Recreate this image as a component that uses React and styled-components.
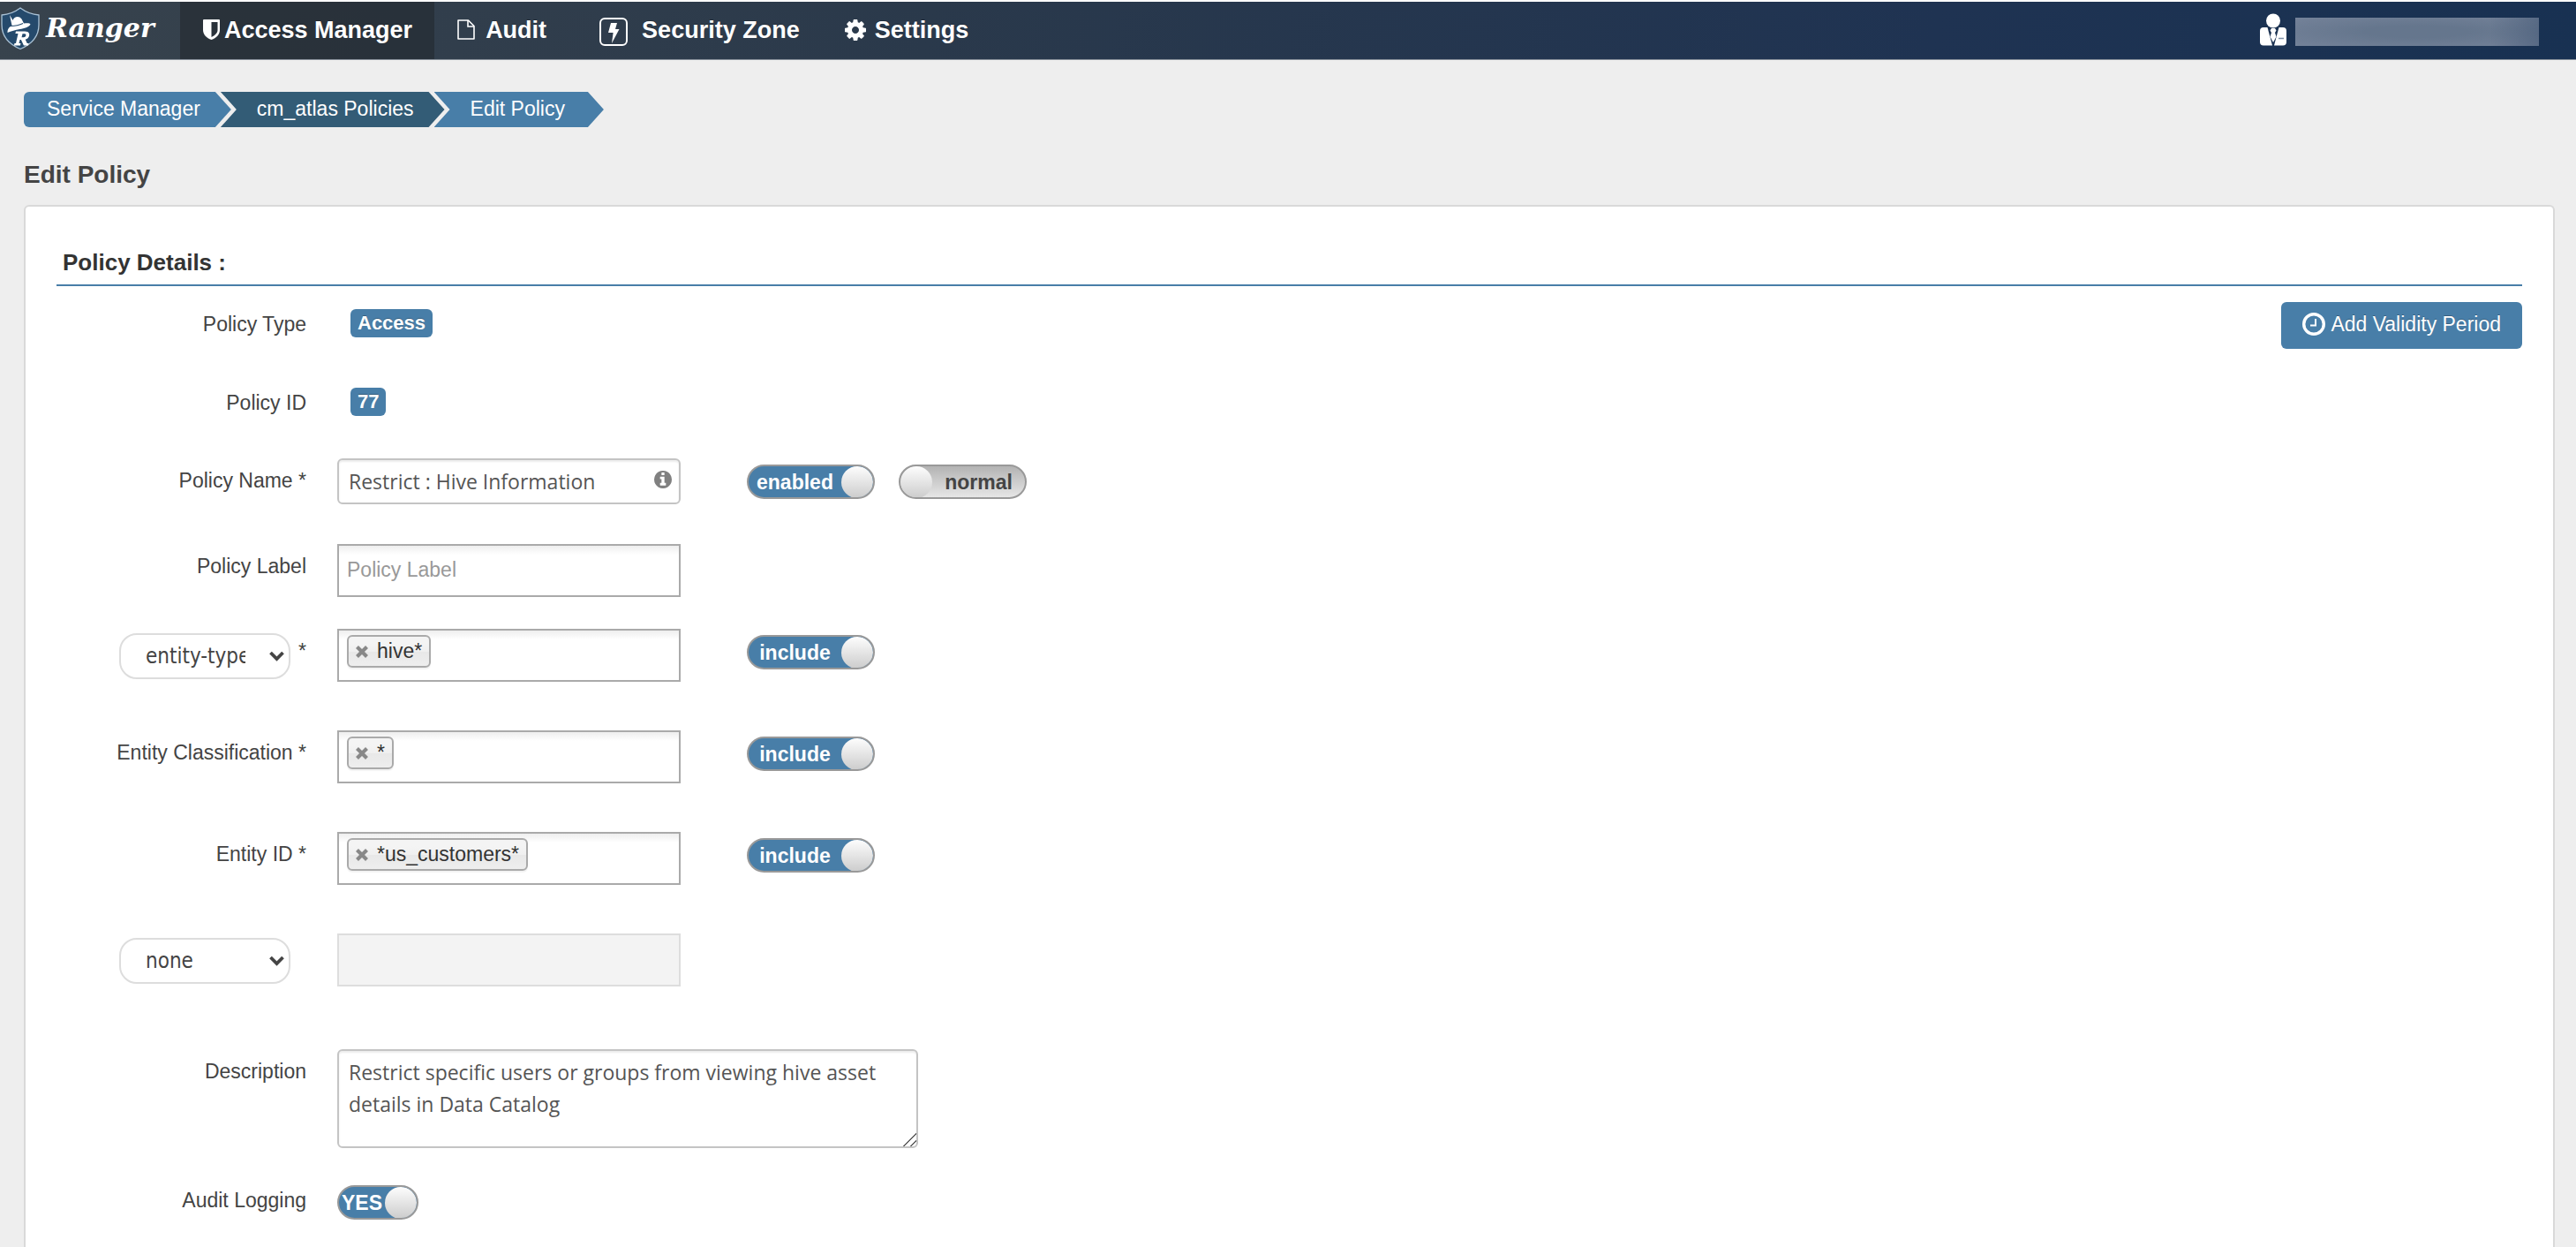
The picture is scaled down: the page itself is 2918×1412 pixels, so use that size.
import React, { useState } from "react";
import styled, { createGlobalStyle } from "styled-components";

const GlobalStyle = createGlobalStyle`
* {
    box-sizing: border-box;
}

body {
    margin: 0;
    background: #eeeeee;
    color: #444444;
    font-family: "Liberation Sans", Arial, sans-serif;
    font-size: 23px;
    line-height: 28px;
}

button, input, textarea, select {
    font-family: inherit;
    font-size: inherit;
    color: inherit;
    margin: 0;
}
`;

const LogoIcon = () => (
    <svg width="46" height="50" viewBox="0 0 46 50" aria-hidden="true">
        <path d="M23 2C17 6.500 9.500 9.500 2 10v11c0 12.500 8 22 21 27.500C36 43 44 33.500 44 21V10C36.500 9.500 29 6.500 23 2z" fill="#254a6c" stroke="#a9c2d6" strokeWidth="1.300" />
        <path d="M11 10l3.500 6c1.500-4.500 7-5.500 10-1.500l2.500 5c4-.5 7-.5 7.500 1.200-2 3-7 4.300-12 5.300-5 1-10 2-14 4 0-4 1.500-6 5-8z" fill="#fff" />
        <path d="M12 22.500c5 0 10-1 14-3" stroke="#254a6c" strokeWidth="1.200" fill="none" />
        <path fillRule="evenodd" d="M18 28.500h10c5 0 6 3 4.700 6-.9 2-2.400 2.800-4 3.200l2 4.300h1.800l-.6 2.500h-5l-3-6.500h-1.400l-1 4h2l-.6 2.500h-7l.6-2.500h1.500l2.500-11h-3.100zm7.500 2.800l-1 4h2.300c2.700 0 3.700-4 1.200-4z" fill="#fff" />
    </svg>
);

const ShieldIcon = () => (
    <svg width="19" height="23" viewBox="0 0 19 23" fill="currentColor" aria-hidden="true">
        <path fillRule="evenodd" d="M1 0h17a1 1 0 0 1 1 1v11c0 5-4 9-9.500 11C4 21 0 17 0 12V1a1 1 0 0 1 1-1zm8.500 3v17c4-2 7-4.500 7-8V3z" />
    </svg>
);

const FileIcon = () => (
    <svg width="20" height="23" viewBox="0 0 20 23" fill="none" stroke="currentColor" strokeWidth="1.600" aria-hidden="true">
        <path d="M1 1h11.500L19 7.500V22H1z" strokeLinejoin="round" />
        <path d="M12 1v7h7" />
    </svg>
);

const BoltIcon = () => (
    <svg width="41" height="38" viewBox="0 0 41 38" aria-hidden="true">
        <rect x="10" y="6" width="30" height="30" rx="5" fill="none" stroke="currentColor" strokeWidth="2" />
        <path d="M22 11h7l-2 7h4.500l-8.500 16 1.600-12H19z" fill="currentColor" />
    </svg>
);

const CogIcon = () => (
    <svg width="24" height="24" viewBox="128 128 1536 1536" fill="currentColor" aria-hidden="true">
        <path d="M1152 896q0-106-75-181t-181-75-181 75-75 181 75 181 181 75 181-75 75-181zm512-109v222q0 12-8 23t-20 13l-185 28q-19 54-39 91 35 50 107 138 10 12 10 25t-9 23q-27 37-99 108t-94 71q-12 0-26-9l-138-108q-44 23-91 38-16 136-29 186-7 28-36 28h-222q-14 0-24.500-8.500t-11.500-21.500l-28-184q-49-16-90-37l-141 107q-10 9-25 9-14 0-25-11-126-114-165-168-7-10-7-23 0-12 8-23 15-21 51-66.500t54-70.500q-27-50-41-99l-183-27q-13-2-21-12.500t-8-23.500v-222q0-12 8-23t19-13l186-28q14-46 39-92-40-57-107-138-10-12-10-24 0-10 9-23 26-36 98.500-107.500t94.500-71.500q13 0 26 10l138 107q44-23 91-38 16-136 29-186 7-28 36-28h222q14 0 24.500 8.500t11.500 21.500l28 184q49 16 90 37l142-107q9-9 24-9 13 0 25 10 129 119 165 170 7 8 7 22 0 12-8 23-15 21-51 66.500t-54 70.500q26 50 41 98l183 28q13 2 21 12.500t8 23.500z" />
    </svg>
);

const UserIcon = () => (
    <svg width="30" height="37" viewBox="0 0 30 37" fill="#fff" aria-hidden="true">
        <circle cx="15" cy="8.500" r="8" />
        <path d="M4 16h4.500L14 36.500H4a4 4 0 0 1-4-4V20a4 4 0 0 1 4-4z" />
        <path d="M26 16h-4.500L16 36.500h10a4 4 0 0 0 4-4V20a4 4 0 0 0-4-4z" />
        <path d="M13 17h4l1.500 2.500-1.500 2.500 1.500 4.500L15 33l-3.500-6.500L13 22l-1.500-2.500z" />
        <path d="M21 28.500h6" stroke="#7f90a8" strokeWidth="1.500" />
    </svg>
);

const InfoIcon = () => (
    <svg width="20" height="20" viewBox="128 128 1536 1536" fill="#808080" aria-hidden="true">
        <path d="M1152 1376v-160q0-14-9-23t-23-9h-96v-512q0-14-9-23t-23-9h-320q-14 0-23 9t-9 23v160q0 14 9 23t23 9h96v320h-96q-14 0-23 9t-9 23v160q0 14 9 23t23 9h448q14 0 23-9t9-23zm-128-896v-160q0-14-9-23t-23-9h-192q-14 0-23 9t-9 23v160q0 14 9 23t23 9h192q14 0 23-9t9-23zm640 416q0 209-103 385.500t-279.500 279.500-385.500 103-385.500-103-279.500-279.500-103-385.500 103-385.500 279.500-279.500 385.500-103 385.500 103 279.500 279.500 103 385.500z" />
    </svg>
);

const ClockIcon = () => (
    <svg width="26" height="26" viewBox="0 0 26 26" fill="none" stroke="currentColor" aria-hidden="true">
        <circle cx="13" cy="13" r="11.300" strokeWidth="3.400" />
        <path d="M15 7v7.500H9" strokeWidth="2" />
    </svg>
);

const CloseIcon = () => (
    <svg width="14" height="14" viewBox="0 0 14 14" aria-hidden="true">
        <path d="M1.500 1.500l11 11M12.500 1.500l-11 11" stroke="#888" strokeWidth="4.200" />
    </svg>
);

const ChevronIcon = () => (
    <svg width="17" height="12" viewBox="0 0 17 12" aria-hidden="true">
        <path d="M1.500 2l7 7 7-7" fill="none" stroke="#444" strokeWidth="3.800" />
    </svg>
);

const Toggle = ({ on, off, label, defaultChecked, small }) => {
    const [checked, setChecked] = useState(defaultChecked);
    return (
        <Switch $on={checked} $small={small}>
            <input
                type="checkbox"
                aria-label={label}
                checked={checked}
                onChange={(e) => setChecked(e.target.checked)}
            />
            <SwitchText>{checked ? on : off}</SwitchText>
            <Knob />
        </Switch>
    );
};

const Resource = ({ id, value, label }) => {
    const [tags, setTags] = useState([value]);
    return (
        <TagBox>
            {tags.map((tag) => (
                <Tag key={tag}>
                    <button type="button" aria-label="Remove" onClick={() => setTags([])}>
                        <CloseIcon />
                    </button>
                    {tag}
                </Tag>
            ))}
            <input id={id} type="text" aria-label={label} />
        </TagBox>
    );
};

const TypeSelect = ({ label, value }) => (
    <SelectWrap>
        <select aria-label={label} defaultValue={value}>
            <option>entity-type</option>
            <option>none</option>
        </select>
        <ChevronIcon />
    </SelectWrap>
);

const App = () => {
    return (
        <Page>
            <GlobalStyle />
            <Navbar>
                <Brand href="#"><LogoIcon />Ranger</Brand>
                <NavLink href="#" $active $gap={5}><ShieldIcon />Access Manager</NavLink>
                <NavLink href="#" $gap={12}><FileIcon />Audit</NavLink>
                <NavLink href="#" $gap={16}><BoltIcon />Security Zone</NavLink>
                <NavLink href="#" $gap={10}><CogIcon />Settings</NavLink>
                <User>
                    <UserIcon />
                    <UserName />
                </User>
            </Navbar>

            <Breadcrumb>
                <Crumb href="#" $first>Service Manager</Crumb>
                <Crumb href="#" $dark>cm_atlas Policies</Crumb>
                <Crumb href="#" $last>Edit Policy</Crumb>
            </Breadcrumb>

            <Title>Edit Policy</Title>

            <Panel>
                <SectionTitle>Policy Details :</SectionTitle>
                <Details>
                    <Form>
                        <Row $gap={57}>
                            <Label as="span" $compact>Policy Type</Label>
                            <Badge>Access</Badge>
                        </Row>
                        <Row $gap={48}>
                            <Label as="span" $compact>Policy ID</Label>
                            <Badge>77</Badge>
                        </Row>
                        <Row $gap={45}>
                            <Label htmlFor="name">Policy Name *</Label>
                            <NameField>
                                <input id="name" type="text" defaultValue="Restrict : Hive Information" />
                                <InfoIcon />
                            </NameField>
                            <Toggles>
                                <Toggle on="enabled" off="disabled" label="Policy status" defaultChecked />
                                <Toggle on="override" off="normal" label="Policy priority" defaultChecked={false} />
                            </Toggles>
                        </Row>
                        <Row $gap={36}>
                            <Label htmlFor="label">Policy Label</Label>
                            <PlainInput id="label" type="text" placeholder="Policy Label" />
                        </Row>
                        <Row $gap={55}>
                            <SelectCell>
                                <TypeSelect label="Resource type" value="entity-type" />
                                <Star>*</Star>
                            </SelectCell>
                            <Resource id="type" value="hive*" label="entity-type" />
                            <Toggles>
                                <Toggle on="include" off="exclude" label="Include type" defaultChecked />
                            </Toggles>
                        </Row>
                        <Row $gap={55}>
                            <Label htmlFor="classification">Entity Classification *</Label>
                            <Resource id="classification" value="*" />
                            <Toggles>
                                <Toggle on="include" off="exclude" label="Include classification" defaultChecked />
                            </Toggles>
                        </Row>
                        <Row $gap={55}>
                            <Label htmlFor="entity">Entity ID *</Label>
                            <Resource id="entity" value="*us_customers*" />
                            <Toggles>
                                <Toggle on="include" off="exclude" label="Include entity" defaultChecked />
                            </Toggles>
                        </Row>
                        <Row $gap={71}>
                            <SelectCell>
                                <TypeSelect label="Extra resource" value="none" />
                                <Star />
                            </SelectCell>
                            <PlainInput type="text" aria-label="none" disabled />
                        </Row>
                        <Row $gap={42}>
                            <Label htmlFor="description">Description</Label>
                            <TextArea
                                id="description"
                                defaultValue="Restrict specific users or groups from viewing hive asset details in Data Catalog"
                            />
                        </Row>
                        <Row $gap={0}>
                            <Label as="span" $compact>Audit Logging</Label>
                            <Toggle on="YES" off="NO" label="Audit Logging" defaultChecked small />
                        </Row>
                    </Form>
                    <ValidityButton type="button"><ClockIcon />Add Validity Period</ValidityButton>
                </Details>
            </Panel>
        </Page>
    );
};

const Page = styled.div`
    display: flex;
    flex-direction: column;
    min-height: 100vh;
`;

const Navbar = styled.nav`
    display: flex;
    height: 68px;
    border-top: 2px solid #ffffff;
    border-bottom: 1px solid #8a929c;
    background: linear-gradient(100deg, #38434d 0%, #2a394b 36%, #1f3352 75%, #183152 100%);
    color: #ffffff;
`;

const Brand = styled.a`
    display: flex;
    align-items: center;
    gap: 6px;
    width: 204px;
    padding-bottom: 6px;
    color: #ffffff;
    font: italic bold 30px/50px "DejaVu Serif", serif;
    text-decoration: none;
`;

const NavLink = styled.a`
    display: flex;
    align-items: center;
    gap: ${(p) => p.$gap}px;
    padding: 0 25px 2px 26px;
    background: ${(p) => (p.$active ? "rgba(32, 38, 44, 0.55)" : "transparent")};
    color: #ffffff;
    font-size: 27px;
    font-weight: bold;
    line-height: 30px;
    text-decoration: none;
    text-shadow: 0 -1px 0 rgba(0, 0, 0, 0.25);
`;

const User = styled.div`
    display: flex;
    align-items: center;
    gap: 10px;
    margin-left: auto;
    padding: 0 42px 2px 0;
`;

const UserName = styled.div`
    width: 276px;
    height: 32px;
    margin-top: 4px;
    background:
        linear-gradient(90deg, transparent 80%, rgba(62, 84, 114, 0.5)),
        radial-gradient(ellipse at center, #65768d 30%, #748299 100%);
`;

const Breadcrumb = styled.nav`
    display: flex;
    padding: 36px 27px 0;
`;

const Crumb = styled.a`
    height: 40px;
    margin-left: ${(p) => (p.$first ? 0 : -12)}px;
    padding: 0 ${(p) => (p.$last ? 44 : 35)}px 0 ${(p) => (p.$first ? 26 : 41)}px;
    border-radius: ${(p) => (p.$first ? "6px 0 0 6px" : 0)};
    background: ${(p) => (p.$dark ? "#335c76" : "#487ea8")};
    clip-path: polygon(
        0 0, calc(100% - 18px) 0, 100% 50%, calc(100% - 18px) 100%, 0 100%
        ${(p) => (p.$first ? "" : ", 18px 50%")}
    );
    color: #ffffff;
    line-height: 38px;
    text-decoration: none;
`;

const Title = styled.h1`
    margin: 0;
    padding: 37px 27px 17px;
    font-size: 28px;
    font-weight: bold;
    line-height: 34px;
`;

const Panel = styled.main`
    flex: 1;
    margin: 0 24px 0 27px;
    padding: 48px 35px 31px;
    border: 2px solid #d9d9d9;
    border-bottom: none;
    border-radius: 6px 6px 0 0;
    background: #ffffff;
`;

const SectionTitle = styled.h2`
    margin: 0;
    padding: 0 7px 10px;
    border-bottom: 2px solid #487ea8;
    color: #333333;
    font-size: 26px;
    font-weight: bold;
    line-height: 30px;
`;

const Details = styled.div`
    display: flex;
    justify-content: space-between;
    align-items: flex-start;
    padding-top: 18px;
`;

const Form = styled.form`
    padding-top: 8px;
`;

const Row = styled.div`
    display: flex;
    align-items: flex-start;
    margin-bottom: ${(p) => p.$gap}px;
`;

const Label = styled.label`
    width: 283px;
    margin-right: 35px;
    padding-top: ${(p) => (p.$compact ? 3 : 11)}px;
    text-align: right;
`;

const SelectCell = styled.div`
    display: flex;
    justify-content: flex-end;
    width: 283px;
    margin-right: 35px;
`;

const SelectWrap = styled.div`
    position: relative;
    margin: 5px 9px 0 0;

    select {
        display: block;
        width: 194px;
        height: 52px;
        padding: 0 49px 0 28px;
        appearance: none;
        border: 2px solid #dddddd;
        border-radius: 20px;
        background: #ffffff;
        font-family: "DejaVu Sans Condensed", "Noto Sans", sans-serif;
        font-size: 24px;
    }

    svg {
        position: absolute;
        top: 20px;
        right: 7px;
        pointer-events: none;
    }
`;

const Star = styled.span`
    width: 9px;
    padding-top: 11px;
`;

const Badge = styled.span`
    height: 32px;
    margin-left: 15px;
    padding: 0 8px;
    border-radius: 6px;
    background: #487ea8;
    color: #ffffff;
    font-size: 22px;
    font-weight: bold;
    line-height: 31px;
    text-shadow: 0 -1px 0 rgba(0, 0, 0, 0.25);
`;

const NameField = styled.div`
    position: relative;

    input {
        display: block;
        width: 389px;
        height: 52px;
        padding: 0 40px 0 11px;
        border: 2px solid #c4c4c4;
        border-radius: 6px;
        box-shadow: inset 0 2px 2px rgba(0, 0, 0, 0.075);
        color: #555555;
        font-family: "Open Sans", sans-serif;
        font-size: 23px;
    }

    svg {
        position: absolute;
        top: 14px;
        right: 10px;
    }
`;

const PlainInput = styled.input`
    width: 389px;
    height: 60px;
    padding: 0 9px 2px;
    border: 2px solid #aaaaaa;
    background: linear-gradient(#eeeeee 0, #ffffff 10px);

    &::placeholder {
        color: #999999;
    }

    &:disabled {
        border-color: #dddddd;
        background: #f3f3f3;
    }
`;

const TagBox = styled.div`
    display: flex;
    width: 389px;
    height: 60px;
    padding: 5px 9px;
    border: 2px solid #aaaaaa;
    background: linear-gradient(#eeeeee 0, #ffffff 10px);

    input {
        flex: 1;
        min-width: 0;
        height: 36px;
        border: none;
        outline: none;
        background: transparent;
    }
`;

const Tag = styled.span`
    display: flex;
    align-items: center;
    height: 37px;
    padding: 0 8px 2px;
    border: 2px solid #aaaaaa;
    border-radius: 6px;
    background: linear-gradient(#f4f4f4 20%, #f0f0f0 50%, #e8e8e8 52%, #eeeeee 100%);
    box-shadow: 0 2px 1px rgba(0, 0, 0, 0.05);
    color: #333333;

    button {
        display: flex;
        margin-right: 10px;
        padding: 2px 0 0;
        border: none;
        background: none;
    }
`;

const TextArea = styled.textarea`
    width: 658px;
    height: 112px;
    padding: 6px 11px;
    border: 2px solid #c4c4c4;
    border-radius: 6px;
    box-shadow: inset 0 2px 2px rgba(0, 0, 0, 0.075);
    color: #555555;
    font-family: "Open Sans", sans-serif;
    font-size: 23px;
    line-height: 36px;
    resize: both;

    &::-webkit-resizer {
        background: linear-gradient(
            135deg,
            transparent 48%, #666666 50%, #666666 54%, transparent 56%,
            transparent 74%, #666666 76%, #666666 80%, transparent 82%
        );
    }
`;

const Toggles = styled.div`
    display: flex;
    gap: 27px;
    margin: 7px 0 0 75px;
`;

const Knob = styled.span`
    flex: none;
    width: 36px;
    height: 36px;
    border-radius: 50%;
    background: linear-gradient(#fdfdfd, #cccccc);
`;

const SwitchText = styled.span`
    flex: 1;
    text-align: center;
`;

const Switch = styled.label`
    position: relative;
    display: flex;
    flex-direction: ${(p) => (p.$on ? "row" : "row-reverse")};
    align-items: center;
    width: ${(p) => (p.$small ? 92 : 145)}px;
    height: 39px;
    border: 2px solid #999999;
    border-radius: 20px;
    background: ${(p) => (p.$on ? "#487ea8" : "linear-gradient(#b3b3b3, #e6e6e6)")};
    color: ${(p) => (p.$on ? "#ffffff" : "#444444")};
    font-weight: bold;
    overflow: hidden;

    input {
        position: absolute;
        inset: 0;
        opacity: 0;
    }
`;

const ValidityButton = styled.button`
    display: flex;
    align-items: center;
    gap: 6px;
    height: 53px;
    padding: 0 24px 3px;
    border: none;
    border-radius: 6px;
    background: #487ea8;
    color: #ffffff;
    text-shadow: 0 -1px 0 rgba(0, 0, 0, 0.25);
`;

export default App;
